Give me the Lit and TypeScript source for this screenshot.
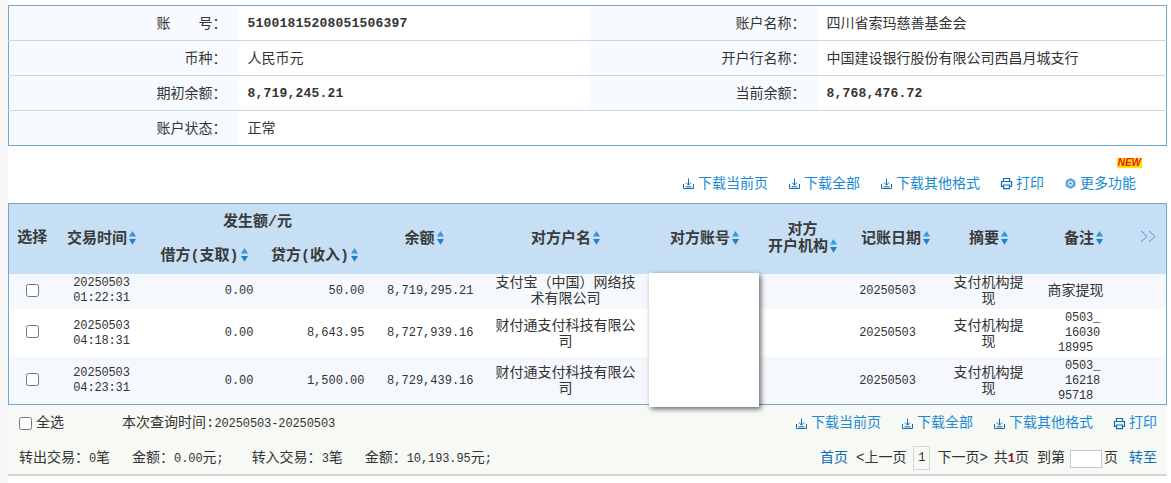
import { LitElement, html, css, svg } from "lit";
import { customElement } from "lit/decorators.js";

const dl = svg`<svg class="ic" viewBox="0 0 13 13" width="13" height="13"><path d="M6.5 1.5v6.5M4 5.6 6.5 8.2 9 5.6M1.5 7v4.5h10V7M3.5 9.8h6" fill="none" stroke="#0f6cb4" stroke-width="1"/></svg>`;
const pr = svg`<svg class="ic" viewBox="0 0 13 13" width="13" height="13"><path d="M3.5 4.5V1.5h6v3M3.5 9.5h-2v-5h10v5h-2M3.5 8h6v3.6h-6z" fill="none" stroke="#0f6cb4" stroke-width="1.2"/></svg>`;
const gear = svg`<svg class="ic" viewBox="0 0 13 13" width="13" height="13"><path d="M6.5 1 11.4 3.8v5.4L6.5 12 1.6 9.2V3.8z" fill="#5fa8e0"/><circle cx="6.5" cy="6.5" r="2.4" fill="#fff"/><circle cx="6.5" cy="6.5" r="1.2" fill="#3d8fd0"/></svg>`;
const sort = svg`<svg class="sort" viewBox="0 0 7 14" width="7" height="14"><path d="M3.5 0 7 5.6H0z" fill="#2f9ae0"/><path d="M0 8h7l-3.5 5.8z" fill="#1f7fc8"/></svg>`;
const chev = svg`<svg viewBox="0 0 16 13" width="16" height="13"><path d="M1 1l6 5.5L1 12M9 1l6 5.5L9 12" fill="none" stroke="#3f9ad8" stroke-width="1"/></svg>`;

const rows = [
  { d: "20250503", t: "01:22:31", cr: "50.00", bal: "8,719,295.21", name: "支付宝（中国）网络技术有限公司", rem: ["商家提现"], cls: "odd short" },
  { d: "20250503", t: "04:18:31", cr: "8,643.95", bal: "8,727,939.16", name: "财付通支付科技有限公司", rem: ["0503_", "16030", "18995"], cls: "even" },
  { d: "20250503", t: "04:23:31", cr: "1,500.00", bal: "8,729,439.16", name: "财付通支付科技有限公司", rem: ["0503_", "16218", "95718"], cls: "odd" },
];

@customElement("app-root")
export class AppRoot extends LitElement {
  static styles = css`
    :host { display: block; width: 1171px; height: 483px; overflow: hidden; background: #fff; box-sizing: border-box; padding: 5px 4px 0 8px; color: #333; font: 14px/16px "Liberation Mono", "Noto Sans CJK SC", monospace; position: relative; }
    .strip { position: absolute; left: 0; top: 0; bottom: 0; width: 8px; background: #f6f6f6; }
    table { border-collapse: collapse; table-layout: fixed; width: 100%; }
    .info { border: 1px solid #6fa5d8; width: 1159px; }
    .info td { height: 35px; padding: 1px 0 0; box-sizing: border-box; border-top: 1px solid #c3d9ec; }
    .info tr:first-child td { border-top: 0; }
    .info .l { background: #f7fbff; text-align: right; padding-right: 12px; }
    .info .l.plain { background: #fff; }
    .info .v { padding-left: 9px; }
    .c1 { width: 230px; } .c2 { width: 350px; } .c3 { width: 229px; }
    .num { font-weight: 700; font-size: 13px; letter-spacing: 0.2px; }
    .acct { letter-spacing: 0.2px; }
    .bar { display: flex; justify-content: flex-end; gap: 20px; color: #1a8ad4; }
    .link { display: inline-flex; align-items: center; gap: 3px; white-space: nowrap; }
    .ic { flex: none; }
    .top { height: 57px; box-sizing: border-box; padding: 18px 31px 0 0; position: relative; }
    .new { position: absolute; right: 25px; top: 12px; background: #ffe600; color: #e8151b; font: italic 700 10px/10px "Liberation Sans", sans-serif; padding: 0 1px; }
    .wrap { position: relative; width: 1159px; }
    .grid { border: 1px solid #6fa5d8; }
    .grid th { background: #c6dff5; font-weight: 700; font-size: 15px; padding: 0; height: 35px; box-sizing: border-box; text-align: center; line-height: 16px; color: #3a3a3a; white-space: nowrap; }
    .grid th[rowspan] { padding-top: 1px; }
    .grid th.pick { padding-right: 2px; }
    .grid th.bal { padding-right: 8px; }
    .grid th.group { padding-right: 4px; padding-top: 4px; }
    .grid th.credit { padding-right: 7px; }
    .grid th.more { padding-right: 6px; }
    .sort { vertical-align: -2px; margin-left: 2px; }
    .grid td { padding: 0; box-sizing: border-box; text-align: center; font-size: 12px; letter-spacing: -0.15px; line-height: 15px; height: 48px; padding-top: 2px; }
    .grid tr.short td { height: 35px; padding-top: 0; }
    .grid tr.odd td { background: #f5f9fd; }
    .grid tr.even td { background: #fff; }
    .grid td.pick { padding-right: 1px; padding-top: 0; }
    .grid td.r { text-align: right; padding-right: 9px; letter-spacing: 0; }
    .grid td.cn { font-size: 14px; letter-spacing: 0; line-height: 16px; padding-left: 6px; padding-right: 6px; }
    .grid td.name { padding-left: 12px; padding-right: 12px; }
    .grid td.date, .grid td.remark { padding-right: 16px; }
    .grid td.remark.cn { padding-left: 0; }
    .pad { display: block; margin-left: 14px; }
    .col-a { width: 49px; } .col-b { width: 88px; } .col-c { width: 117px; } .col-d { width: 111px; } .col-e { width: 109px; }
    .col-f { width: 166px; } .col-g { width: 112px; } .col-h { width: 84px; } .col-i { width: 102px; } .col-j { width: 84px; } .col-k { width: 106px; }
    input[type="checkbox"] { margin: 0; width: 13px; height: 13px; vertical-align: middle; }
    .cover { position: absolute; left: 641px; top: 70px; width: 110px; height: 134px; background: #fff; box-shadow: 2px 2px 5px rgba(0,0,0,.6); }
    .foot { width: 1159px; height: 71px; background: #f7f9f5; border-bottom: 2px solid #d5d5d5; box-sizing: border-box; padding: 1px 10px 0 11px; display: flex; flex-direction: column; }
    .frow { height: 34px; flex: none; display: flex; align-items: center; justify-content: space-between; }
    .frow + .frow { height: 35px; padding-top: 1px; box-sizing: border-box; }
    .fl { display: flex; align-items: center; }
    .all { display: flex; align-items: center; gap: 4px; width: 103px; }
    .n { font-size: 12px; letter-spacing: -0.1px; }
    .cnt { display: flex; gap: 22px; }
    .cnt span.gapped { margin-left: 6px; }
    .pager { display: flex; align-items: center; white-space: nowrap; }
    .pager a { color: #0f6cb4; }
    .pg { border: 1px solid #d5d5d5; width: 15px; height: 22px; line-height: 22px; text-align: center; margin: 0 7px; background: #f7f9f5; font-size: 12px; }
    .box { width: 30px; height: 16px; border: 1px solid #c9c9c9; background: #fff; margin: 2px 2px 0 5px; }
    .red { color: #7a2030; font-weight: 700; font-size: 12px; }
    .gl { margin-left: 8px; } .gs { margin-left: 6px; } .gm { margin-left: 8px; } .gt { margin-left: 11px; }
  `;

  links(withMore: boolean) {
    return html`<span class="link">${dl}下载当前页</span><span class="link">${dl}下载全部</span><span class="link">${dl}下载其他格式</span><span class="link">${pr}打印</span>${withMore ? html`<span class="link">${gear}更多功能</span>` : ""}`;
  }

  render() {
    return html`
      <div class="strip"></div>
      <table class="info">
        <colgroup><col class="c1" /><col class="c2" /><col class="c3" /><col /></colgroup>
        <tr><td class="l">账　　号：</td><td class="v num acct">51001815208051506397</td><td class="l">账户名称：</td><td class="v">四川省索玛慈善基金会</td></tr>
        <tr><td class="l">币种：</td><td class="v">人民币元</td><td class="l">开户行名称：</td><td class="v">中国建设银行股份有限公司西昌月城支行</td></tr>
        <tr><td class="l">期初余额：</td><td class="v num">8,719,245.21</td><td class="l">当前余额：</td><td class="v num">8,768,476.72</td></tr>
        <tr><td class="l">账户状态：</td><td class="v">正常</td><td class="l plain"></td><td class="v"></td></tr>
      </table>
      <div class="top bar"><span class="new">NEW</span>${this.links(true)}</div>
      <div class="wrap">
        <table class="grid">
          <colgroup><col class="col-a" /><col class="col-b" /><col class="col-c" /><col class="col-d" /><col class="col-e" /><col class="col-f" /><col class="col-g" /><col class="col-h" /><col class="col-i" /><col class="col-j" /><col class="col-k" /><col /></colgroup>
          <tr>
            <th rowspan="2" class="pick">选择</th>
            <th rowspan="2">交易时间${sort}</th>
            <th colspan="2" class="group">发生额/元</th>
            <th rowspan="2" class="bal">余额${sort}</th>
            <th rowspan="2">对方户名${sort}</th>
            <th rowspan="2">对方账号${sort}</th>
            <th rowspan="2">对方<br />开户机构${sort}</th>
            <th rowspan="2">记账日期${sort}</th>
            <th rowspan="2">摘要${sort}</th>
            <th rowspan="2">备注${sort}</th>
            <th rowspan="2" class="more">${chev}</th>
          </tr>
          <tr><th>借方(支取)${sort}</th><th class="credit">贷方(收入)${sort}</th></tr>
          ${rows.map(
            (r) => html`<tr class=${r.cls}>
              <td class="pick"><input type="checkbox" /></td>
              <td>${r.d}<br />${r.t}</td>
              <td class="r">0.00</td>
              <td class="r">${r.cr}</td>
              <td class="r">${r.bal}</td>
              <td class="cn name">${r.name}</td>
              <td></td>
              <td></td>
              <td class="date">${r.d}</td>
              <td class="cn">支付机构提现</td>
              <td class=${r.rem.length === 1 ? "cn remark" : "remark"}>${r.rem.map((x, i) => (r.rem.length > 1 && i < 2 ? html`<span class="pad">${x}</span>` : x))}</td>
              <td></td>
            </tr>`
          )}
        </table>
        <div class="cover"></div>
      </div>
      <div class="foot">
        <div class="frow">
          <div class="fl"><label class="all"><input type="checkbox" />全选</label><span>本次查询时间:<span class="n">20250503-20250503</span></span></div>
          <div class="bar">${this.links(false)}</div>
        </div>
        <div class="frow">
          <div class="cnt"><span>转出交易：<span class="n">0</span>笔</span><span>金额：<span class="n">0.00</span>元<span class="n">;</span></span><span class="gapped">转入交易：<span class="n">3</span>笔</span><span>金额：<span class="n">10,193.95</span>元<span class="n">;</span></span></div>
          <div class="pager"><a>首页</a><span class="gl">&lt;上一页</span><span class="pg">1</span><span>下一页&gt;</span><span class="gs">共<span class="red">1</span>页</span><span class="gm">到第</span><span class="box"></span><span>页</span><a class="gt">转至</a></div>
        </div>
      </div>
    `;
  }
}
